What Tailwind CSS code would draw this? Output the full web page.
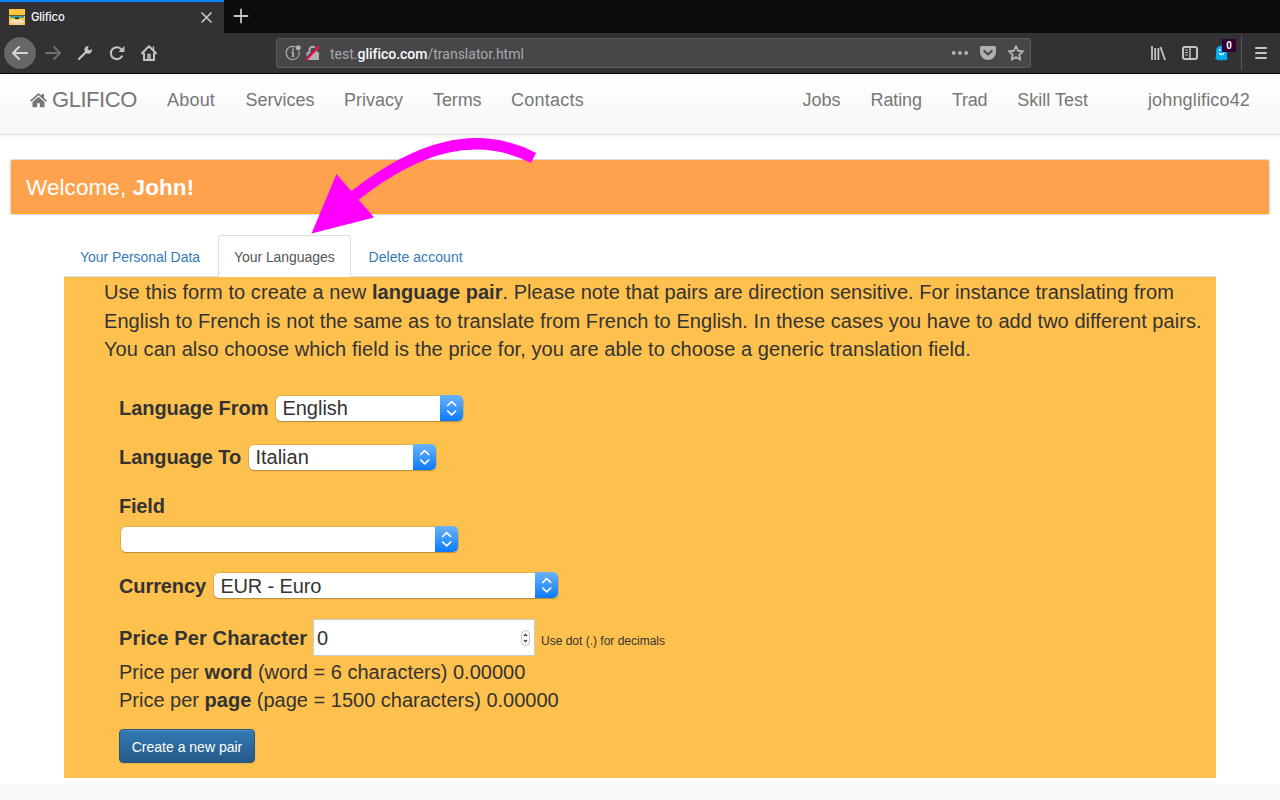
<!DOCTYPE html>
<html lang="en">
<head>
<meta charset="utf-8">
<title>Glifico</title>
<script src="https://cdn.jsdelivr.net/npm/@tailwindcss/browser@4"></script>
</head>
<body class="relative h-[800px] w-[1280px] overflow-hidden bg-white font-['Liberation_Sans',Arial,sans-serif] text-[#333333]">

<!-- Tab strip -->
<header>
  <div class="flex h-[33px] bg-[#0c0c0d]">
    <div class="flex w-[224px] items-center border-t-2 border-[#0a84ff] bg-[#323234] pl-[9px] pr-[12px]">
      <svg class="-mt-[1px] h-4 w-4" viewBox="0 0 16 16"><rect width="16" height="16" fill="#ffc83d"/><rect y="6" width="16" height="1" fill="#6b5a2a"/><rect x="1" y="7" width="14" height="2" fill="#3f9c9c"/><rect x="6" y="8.500" width="4" height="1.500" fill="#182a3a"/><path d="M1 12l4-1.500 3 1 3-1 4 1.500v1.500H1z" fill="#f4e3d0"/><path d="M4 13h8v3H4z" fill="#f5cba8"/></svg>
      <span class="-mt-[1px] ml-[6px] font-['Inter',sans-serif] text-[11.300px] font-medium leading-4 tracking-[-0.150px] text-[#f9f9fa]">Glifico</span>
      <svg class="-mt-px ml-auto h-[11px] w-[11px]" viewBox="0 0 11 11" fill="none" stroke="#c4c4c5" stroke-width="1.700" stroke-linecap="round"><path d="M1 1l9 9M10 1L1 10"/></svg>
    </div>
    <svg class="ml-[9px] mt-[8px] h-4 w-4" viewBox="0 0 16 16" fill="none" stroke="#c4c4c5" stroke-width="1.800" stroke-linecap="round"><path d="M8 1.500v13M1.500 8h13"/></svg>
  </div>

  <!-- Toolbar -->
  <div class="flex h-[41px] items-center border-b border-[#0c0c0d] bg-[#323234] pl-1">
    <div class="flex h-8 w-8 items-center justify-center rounded-full bg-[#676768] ring-1 ring-[#29292b]">
      <svg class="h-4 w-4" viewBox="0 0 16 16" fill="none" stroke="#d7d7d8" stroke-width="2" stroke-linecap="round" stroke-linejoin="round"><path d="M15 8H1.500M7 2L1 8l6 6"/></svg>
    </div>
    <svg class="ml-[9px] h-4 w-4" viewBox="0 0 16 16" fill="none" stroke="#6e6e70" stroke-width="2" stroke-linecap="round" stroke-linejoin="round"><path d="M1 8h13.500M9 2l6 6-6 6"/></svg>
    <svg class="ml-4 h-4 w-4" viewBox="0 0 16 16"><path d="M2 14l7-7" stroke="#c4c4c5" stroke-width="2.200" stroke-linecap="round"/><path d="M11.900 1.100L10.500 3.600l1.900 1.900 2.500-1.400c.3 1.300 0 2.700-1 3.600-1.200 1.200-3 1.300-4.400.5L7.800 6.500c-.7-1.400-.6-3.100.5-4.300 1-1 2.300-1.400 3.600-1.100z" fill="#c4c4c5"/></svg>
    <svg class="ml-4 h-4 w-4" viewBox="0 0 16 16"><path d="M13 11.300a6 6 0 1 1-.5-7" fill="none" stroke="#c4c4c5" stroke-width="2" stroke-linecap="round"/><path d="M15.500 1v5.300a.7.7 0 0 1-.7.700H9.500z" fill="#c4c4c5"/></svg>
    <svg class="ml-4 h-4 w-4" viewBox="0 0 16 16" fill="none" stroke="#c4c4c5" stroke-width="2" stroke-linecap="round" stroke-linejoin="round"><path d="M1 8.200L8 1.200l7 7M3 8.500V15h10V8.500"/><path d="M7 14v-4.500h2V14" stroke-width="1.500"/><path d="M12.500 2v2" stroke-width="1.500"/></svg>

    <div class="ml-[119px] flex h-[30px] w-[755px] items-center rounded-[3px] border border-[#5c5c5e] bg-[#474749] pl-[8px] pr-[6px]">
      <svg class="h-4 w-4" viewBox="0 0 16 16" fill="none"><path d="M10.500 2A6.600 6.600 0 1 0 14 6" stroke="#b1b1b3" stroke-width="1.100"/><circle cx="13.200" cy="2.800" r="2.500" fill="#b1b1b3"/><path d="M8 6.500v5" stroke="#b1b1b3" stroke-width="1.800"/><path d="M6.500 7H8M6.500 11.300h3" stroke="#b1b1b3"/><circle cx="8" cy="4.500" r="1.100" fill="#b1b1b3"/></svg>
      <svg class="ml-[4px] h-4 w-4" viewBox="0 0 16 16" fill="none"><path d="M4.500 7V5a3.200 3.200 0 0 1 6.400 0v2" stroke="#b1b1b3" stroke-width="2"/><rect x="1.500" y="7" width="12.500" height="8" rx="1" fill="#b1b1b3"/><path d="M.3 14L13 .5" stroke="#474749" stroke-width="1.600"/><path d="M1.500 14.500L14 1.500" stroke="#f5063c" stroke-width="2" stroke-linecap="round"/></svg>
      <span class="ml-[9px] whitespace-nowrap pt-[2px] font-['Roboto',sans-serif] text-[14px] leading-4 text-[#a9a9ab]">test.<span class="font-medium tracking-[-0.020px] text-[#f9f9fa]">glifico.com</span>/translator.html</span>
      <svg class="ml-auto h-4 w-4" viewBox="0 0 16 16" fill="#b1b1b3"><circle cx="1.800" cy="8" r="1.900"/><circle cx="8" cy="8" r="1.900"/><circle cx="14.200" cy="8" r="1.900"/></svg>
      <svg class="ml-[12px] h-4 w-4" viewBox="0 0 16 16"><path d="M1.500 1h13A1.500 1.500 0 0 1 16 2.500V7A8 8 0 0 1 0 7V2.500A1.500 1.500 0 0 1 1.500 1z" fill="#b1b1b3"/><path d="M4.300 6L8 9.500 11.700 6" fill="none" stroke="#474749" stroke-width="2.200" stroke-linecap="round" stroke-linejoin="round"/></svg>
      <svg class="ml-[12px] h-4 w-4" viewBox="0 0 16 16" fill="none" stroke="#b1b1b3" stroke-width="1.900" stroke-linejoin="round"><path d="M8 1.200l2 4.500 5 .5-3.700 3.400 1 5L8 12.100l-4.300 2.500 1-5L1 6.200l5-.5z"/></svg>
    </div>
    <svg class="ml-[119px] h-4 w-4" viewBox="0 0 16 16" fill="none" stroke="#c4c4c5" stroke-width="1.800"><path d="M2 1v14M5.200 3v12M8.400 3v12M10.500 2l4.500 13"/></svg>
    <svg class="ml-4 h-4 w-4" viewBox="0 0 16 16" fill="none" stroke="#c4c4c5"><rect x="1" y="2" width="14" height="12" rx="2" stroke-width="2"/><path d="M8 2v12" stroke-width="1.500"/><path d="M3 5h3M3 7.500h3M3 10h3" /></svg>
    <div class="relative ml-[17px] h-4 w-[13px]">
      <svg class="h-4 w-[13px]" viewBox="0 0 13 16"><path d="M1 12V6a5.500 5.500 0 0 1 11 0V12l1 2-2 .5-1 1-1.800-1L6.500 16l-1.800-1.500-1.800 1-1-1L0 14z" fill="#00aef0"/><path d="M4 8c1 2 4 2 5 0" fill="none" stroke="#fff" stroke-width="1.300"/><circle cx="4.700" cy="5" r="1" fill="#fff"/></svg>
      <div class="absolute -top-[6px] left-[7px] flex h-[13px] w-[14px] items-center justify-center bg-[#330033] text-[10px] font-bold leading-none text-white">0</div>
    </div>
    <div class="ml-[13px] h-[34px] w-px bg-[#59595b]"></div>
    <svg class="ml-[12px] h-[14px] w-[14px]" viewBox="0 0 14 14" stroke="#c4c4c5" stroke-width="2" stroke-linecap="round"><path d="M2 2h10M2 7h10M2 12h10"/></svg>
  </div>
</header>

<!-- Site navigation -->
<nav class="flex h-[61px] border-b border-[#e2e2e2] bg-linear-to-b from-white to-[#f7f7f7] pt-[16px] text-[18px] leading-5 text-[#777777] shadow-[0_1px_5px_rgba(0,0,0,0.075)]">
  <a class="flex w-[137px] pl-[30px] text-[22px] tracking-[-0.450px]"><svg class="mr-[5px] mt-[3px] h-[15px] w-[17px] shrink-0" viewBox="0 0 17 15" fill="#777777"><path d="M8.500 0L0 7.600l1.100 1.200L8.500 2.300l7.400 6.500L17 7.600l-3-2.700V1h-2.400v1.800z"/><path d="M8.500 3.700L2.500 9v5.300h4.600v-4h2.800v4h4.600V9z"/></svg>GLIFICO</a>
  <a class="w-[78.500px] pl-[30px] tracking-[0.200px]">About</a>
  <a class="w-[98.500px] pl-[30px]">Services</a>
  <a class="w-[89px] pl-[30px]">Privacy</a>
  <a class="w-[78px] pl-[30px] tracking-[-0.100px]">Terms</a>
  <a class="pl-[30px] tracking-[0.250px]">Contacts</a>
  <div class="ml-auto flex gap-[30px] pr-[30px]"><a>Jobs</a><a class="tracking-[-0.100px]">Rating</a><a class="tracking-[-0.250px]">Trad</a><a>Skill Test</a><a class="ml-[30px] tracking-[0.150px]">johnglifico42</a></div>
</nav>

<section class="mx-[10px] mt-[24px] flex h-[55px] items-center rounded-[3px] border border-[#dddddd] border-b-[#ffa500] bg-[#ffa24d] pl-[15px] pt-[2px] text-[22.500px] tracking-[0.080px] text-white shadow-[0_1px_2px_rgba(0,0,0,0.150)]">
  <span>Welcome, <b>John!</b></span>
</section>

<main class="mx-[64px] mt-[21px]">
  <div class="flex h-[42px] border-b border-[#dddddd] text-[14px] leading-5 text-[#337ab7]">
    <a class="w-[154px] pl-[16px] pt-[12px] tracking-[-0.050px]">Your Personal Data</a>
    <a class="h-[42px] w-[133px] rounded-t-[4px] border border-b-white border-[#dddddd] bg-white pl-[15px] pt-[11px] tracking-[-0.060px] text-[#555555]">Your Languages</a>
    <a class="pl-[17.500px] pt-[12px] tracking-[0.060px]">Delete account</a>
  </div>
  <div class="h-[501px] bg-[#ffc14d] pl-[40px] text-[20px] leading-[28.570px]">
    <p class="h-[88px] whitespace-nowrap pt-[1px]"><span class="tracking-[0.042px]"><span class="tracking-[0.075px]">Use this form to create a new </span><b>language pair</b>. Please note that pairs are direction sensitive. For instance translating from</span><br><span class="tracking-[0.050px]">English to French is not the same as to translate from French to English. In these cases you have to add two different pairs.</span><br><span class="tracking-[0.070px]">You can also choose which field is the price for, you are able to choose a generic translation field.</span></p>
    <form class="pl-[15px]">
      <div class="mt-[29px] flex h-[28px] items-center">
        <label class="w-[157.400px] whitespace-nowrap font-bold tracking-[-0.050px]">Language From</label>
        <div class="mt-px flex h-[25px] w-[187px] rounded-[5px] bg-white shadow-[0_0_0_0.500px_#c59b48,0_1px_1px_rgba(0,0,0,0.350)]"><span class="flex-1 pl-[6px] leading-[24px]">English</span><svg class="-mt-px h-[26px] w-[23px] rounded-r-[5px]" viewBox="0 0 23 26"><defs><linearGradient id="blue" x2="0" y2="1"><stop stop-color="#6cb3fa"/><stop offset="1" stop-color="#0a7aff"/></linearGradient></defs><rect width="23" height="26" fill="url(#blue)"/><path d="M7.700 10.500l4-3.800 4 3.800M7.700 16l4 3.800 4-3.800" fill="none" stroke="#fff" stroke-width="1.700" stroke-linecap="round" stroke-linejoin="round"/></svg></div>
      </div>
      <div class="mt-[21px] flex h-[28px] items-center">
        <label class="w-[130.400px] whitespace-nowrap font-bold tracking-[-0.080px]">Language To</label>
        <div class="mt-px flex h-[25px] w-[187px] rounded-[5px] bg-white shadow-[0_0_0_0.500px_#c59b48,0_1px_1px_rgba(0,0,0,0.350)]"><span class="flex-1 pl-[6px] leading-[24px]">Italian</span><svg class="-mt-px h-[26px] w-[23px] rounded-r-[5px]" viewBox="0 0 23 26"><rect width="23" height="26" fill="url(#blue)"/><path d="M7.700 10.500l4-3.800 4 3.800M7.700 16l4 3.800 4-3.800" fill="none" stroke="#fff" stroke-width="1.700" stroke-linecap="round" stroke-linejoin="round"/></svg></div>
      </div>
      <div class="mt-[21px]">
        <label class="block h-[28px] font-bold tracking-[-0.200px]">Field</label>
        <div class="ml-[1.500px] mt-[7px] flex h-[25px] w-[337px] rounded-[5px] bg-white shadow-[0_0_0_0.500px_#c59b48,0_1px_1px_rgba(0,0,0,0.350)]"><span class="flex-1"></span><svg class="-mt-px h-[26px] w-[23px] rounded-r-[5px]" viewBox="0 0 23 26"><rect width="23" height="26" fill="url(#blue)"/><path d="M7.700 10.500l4-3.800 4 3.800M7.700 16l4 3.800 4-3.800" fill="none" stroke="#fff" stroke-width="1.700" stroke-linecap="round" stroke-linejoin="round"/></svg></div>
      </div>
      <div class="mt-[19px] flex h-[28px] items-center">
        <label class="w-[95.400px] whitespace-nowrap pt-[2px] font-bold tracking-[-0.100px]">Currency</label>
        <div class="mt-px flex h-[25px] w-[344px] rounded-[5px] bg-white shadow-[0_0_0_0.500px_#c59b48,0_1px_1px_rgba(0,0,0,0.350)]"><span class="flex-1 pl-[6px] leading-[27px] tracking-[-0.150px]">EUR - Euro</span><svg class="-mt-px h-[26px] w-[23px] rounded-r-[5px]" viewBox="0 0 23 26"><rect width="23" height="26" fill="url(#blue)"/><path d="M7.700 10.500l4-3.800 4 3.800M7.700 16l4 3.800 4-3.800" fill="none" stroke="#fff" stroke-width="1.700" stroke-linecap="round" stroke-linejoin="round"/></svg></div>
      </div>
      <div class="mt-[20px] flex h-[37px] items-center">
        <label class="w-[194px] whitespace-nowrap pt-[2px] font-bold tracking-[0.130px]">Price Per Character</label>
        <div class="flex h-[37px] w-[222px] items-center border border-[#cccccc] bg-white pl-[3px] pr-[4px]"><span class="flex-1 pt-[2px]">0</span><svg class="h-[16px] w-[9px]" viewBox="0 0 9 16" fill="none"><rect x=".5" y=".5" width="8" height="15" rx="4" stroke="#c4c4c4"/><path d="M3 6l1.500-1.700L6 6M3 10l1.500 1.700L6 10" stroke="#333" stroke-width="1.200"/></svg></div>
        <small class="ml-[6px] whitespace-nowrap pt-[7px] text-[12px]">Use dot (.) for decimals</small>
      </div>
      <p class="mt-[2px] whitespace-nowrap leading-[28px]"><span>Price per <b>word</b> (word = 6 characters) 0.00000</span><br><span>Price per <b>page</b> (page = 1500 characters) 0.00000</span></p>
      <button type="button" class="mt-[15px] flex h-[34px] w-[136px] items-center justify-center whitespace-nowrap rounded-[4px] border border-[#245580] bg-linear-to-b from-[#337ab7] to-[#265a88] pt-[2px] text-[14px] text-white shadow-[inset_0_1px_0_rgba(255,255,255,0.150),0_1px_1px_rgba(0,0,0,0.075)]">Create a new pair</button>
    </form>
  </div>
</main>
<footer class="mt-[7px] h-[15px] bg-[#f9f9f9]"></footer>

<!-- Pointer arrow over the tabs -->
<svg class="absolute left-[300px] top-[130px] h-[110px] w-[245px]" viewBox="300 130 245 110"><path d="M350 200L355.500 195C418 146 477 129 533.500 158" fill="none" stroke="#ff00ff" stroke-width="11.500"/><path d="M311.500 233.500L336.500 174l37.500 43.500z" fill="#ff00ff"/></svg>
</body>
</html>
